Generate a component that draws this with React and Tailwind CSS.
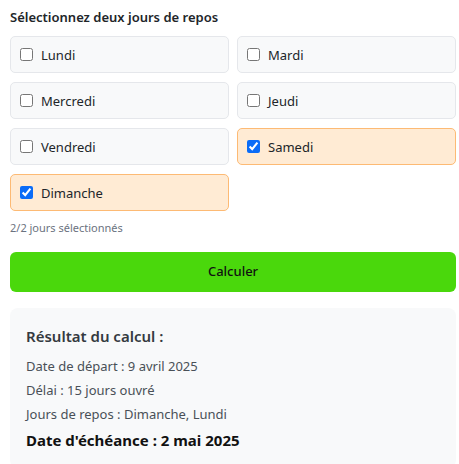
import React, { useState } from 'react';

const JOURS = ['Lundi', 'Mardi', 'Mercredi', 'Jeudi', 'Vendredi', 'Samedi', 'Dimanche'];

const App = () => {
  const [selected, setSelected] = useState(['Samedi', 'Dimanche']);

  const toggle = (jour) => {
    setSelected((prev) =>
      prev.includes(jour) ? prev.filter((j) => j !== jour) : prev.length < 2 ? [...prev, jour] : prev
    );
  };

  return (
    <div className="w-[446px] ml-[10px] pt-[7px] text-[#212529] bg-white" style={{ fontFamily: '"Noto Sans", "Open Sans", sans-serif' }}>
      <h3 className="text-[13px] font-semibold leading-[20px] mb-[9px]">Sélectionnez deux jours de repos</h3>

      <div className="grid grid-cols-2 gap-x-[8px] gap-y-[9px]">
        {JOURS.map((jour) => {
          const isChecked = selected.includes(jour);
          return (
            <label
              key={jour}
              className={`flex items-center h-[37px] px-[9px] rounded-[5px] border cursor-pointer ${
                isChecked ? 'bg-[#ffebd4] border-[#fdba74]' : 'bg-[#f8f9fa] border-[#e5e7eb]'
              }`}
            >
              <input
                type="checkbox"
                checked={isChecked}
                onChange={() => toggle(jour)}
                className="w-[13px] h-[13px] m-0 accent-[#0b6cf7]"
              />
              <span className="ml-[8px] text-[13px] leading-[18px]">{jour}</span>
            </label>
          );
        })}
      </div>

      <p className="mt-[9px] text-[11px] leading-[16px] text-[#6b7280]">2/2 jours sélectionnés</p>

      <button className="mt-[16px] w-full h-[40px] rounded-[6px] bg-[#4ad80c] text-[13px] font-medium text-[#111]">
        Calculer
      </button>

      <div className="mt-[16px] rounded-[8px] bg-[#f8f9fa] px-[16px] pt-[16px] pb-[14px]">
        <h4 className="text-[15px] font-semibold leading-[24px] text-[#343a40] mb-[6px]">Résultat du calcul :</h4>
        <p className="text-[13px] leading-[24px] text-[#495057]">Date de départ : 9 avril 2025</p>
        <p className="text-[13px] leading-[24px] text-[#495057]">Délai : 15 jours ouvré</p>
        <p className="text-[13px] leading-[24px] text-[#495057]">Jours de repos : Dimanche, Lundi</p>
        <p className="text-[15px] font-bold leading-[28px] text-[#111]">Date d'échéance : 2 mai 2025</p>
      </div>
    </div>
  );
};

export default App;
